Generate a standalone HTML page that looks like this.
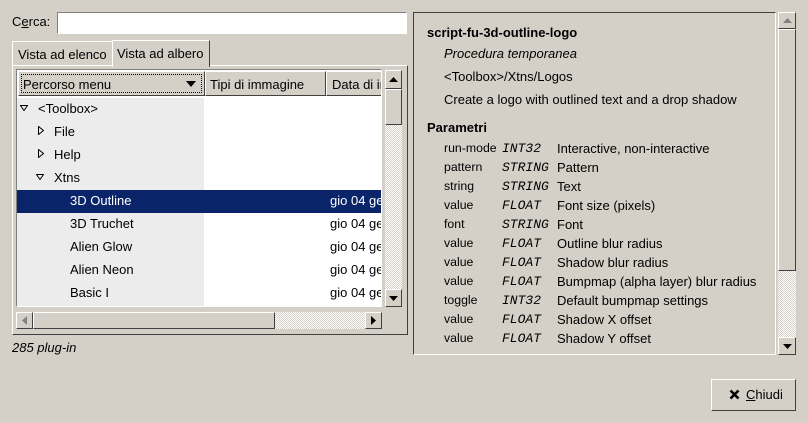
<html><head><style>
body{margin:0;width:808px;height:423px;background:#d4d0c8;font:13px "Liberation Sans",sans-serif;color:#000;position:relative;overflow:hidden}
.a{position:absolute}
.rs{border:1px solid;border-color:#fff #404040 #404040 #fff;background:#d4d0c8;box-sizing:border-box}
.sk{border:1px solid;border-color:#808080 #fff #fff #808080;box-sizing:border-box}
.st{background-color:#d4d0c8;background-image:repeating-conic-gradient(#fff 0 25%,#d4d0c8 0 50%);background-size:2px 2px}
.t{white-space:nowrap;line-height:15px}
.mono{font-family:"Liberation Mono",monospace;font-style:italic;font-size:13px}
</style></head><body>
<div class="a t" style="left:12px;top:14px">C<u>e</u>rca:</div>
<div class="a sk" style="left:57px;top:12px;width:350px;height:22px;background:#fff"></div>

<div class="a rs" style="left:12px;top:41px;width:101px;height:25px;border-bottom:none"></div>
<div class="a t" style="left:18px;top:47px">Vista ad elenco</div>
<div class="a rs" style="left:112px;top:40px;width:98px;height:27px;border-bottom:none;z-index:2"></div>
<div class="a t" style="left:117px;top:46px;z-index:3">Vista ad albero</div>
<div class="a rs" style="left:12px;top:65px;width:396px;height:270px"></div>

<div class="a sk" style="left:16px;top:69px;width:366px;height:238px;background:#fff;overflow:hidden">
 <div class="a" style="left:0;top:28px;width:187px;height:210px;background:#ececec"></div>
 <div class="a rs" style="left:1px;top:1px;width:187px;height:25px"><div class="a" style="left:2px;top:2px;right:2px;bottom:2px;border:1px dotted #000"></div></div>
 <div class="a t" style="left:6px;top:7px">Percorso menu</div>
 <svg class="a" style="left:169px;top:11px" width="10" height="6"><path d="M0 0H10L5 6Z"/></svg>
 <div class="a rs" style="left:188px;top:1px;width:121px;height:25px"></div>
 <div class="a t" style="left:193px;top:7px">Tipi di immagine</div>
 <div class="a rs" style="left:309px;top:1px;width:60px;height:25px;overflow:hidden"><div class="a t" style="left:5px;top:5px">Data di immissione</div></div>
 <div class="a" style="left:0;top:120px;width:366px;height:23px;background:#0a246a"></div>
 <svg class="a" style="left:3px;top:35px" width="8" height="6"><path d="M.5 .5H7.5L4 5.5Z" fill="none" stroke="#000"/></svg>
 <div class="a t" style="left:21px;top:31px">&lt;Toolbox&gt;</div>
 <svg class="a" style="left:21px;top:56px" width="6" height="9"><path d="M.5 .5V8.5L5.5 4.5Z" fill="none" stroke="#000"/></svg>
 <div class="a t" style="left:37px;top:54px">File</div>
 <svg class="a" style="left:21px;top:79px" width="6" height="9"><path d="M.5 .5V8.5L5.5 4.5Z" fill="none" stroke="#000"/></svg>
 <div class="a t" style="left:37px;top:77px">Help</div>
 <svg class="a" style="left:19px;top:104px" width="8" height="6"><path d="M.5 .5H7.5L4 5.5Z" fill="none" stroke="#000"/></svg>
 <div class="a t" style="left:37px;top:100px">Xtns</div>
 <div class="a t" style="left:53px;top:123px;color:#fff">3D Outline</div><div class="a t" style="left:313px;top:123px;color:#fff">gio 04 gen</div>
 <div class="a t" style="left:53px;top:146px">3D Truchet</div><div class="a t" style="left:313px;top:146px">gio 04 gen</div>
 <div class="a t" style="left:53px;top:169px">Alien Glow</div><div class="a t" style="left:313px;top:169px">gio 04 gen</div>
 <div class="a t" style="left:53px;top:192px">Alien Neon</div><div class="a t" style="left:313px;top:192px">gio 04 gen</div>
 <div class="a t" style="left:53px;top:215px">Basic I</div><div class="a t" style="left:313px;top:215px">gio 04 gen</div>
</div>

<div class="a st" style="left:385px;top:70px;width:17px;height:237px"></div>
<div class="a rs" style="left:385px;top:70px;width:17px;height:19px"></div>
<svg class="a" style="left:389px;top:77px" width="9" height="5"><path d="M0 5H9L4.5 0Z"/></svg>
<div class="a rs" style="left:385px;top:89px;width:17px;height:36px"></div>
<div class="a rs" style="left:385px;top:289px;width:17px;height:18px"></div>
<svg class="a" style="left:389px;top:296px" width="9" height="5"><path d="M0 0H9L4.5 5Z"/></svg>

<div class="a st" style="left:16px;top:312px;width:366px;height:17px"></div>
<div class="a rs" style="left:16px;top:312px;width:17px;height:17px"></div>
<svg class="a" style="left:22px;top:316px" width="5" height="9"><path d="M5 0V9L0 4.5Z" fill="#808080"/></svg>
<div class="a rs" style="left:33px;top:312px;width:242px;height:17px"></div>
<div class="a rs" style="left:365px;top:312px;width:17px;height:17px"></div>
<svg class="a" style="left:371px;top:316px" width="5" height="9"><path d="M0 0V9L5 4.5Z"/></svg>

<div class="a t" style="left:12px;top:340px;font-style:italic">285 plug-in</div>

<div class="a sk" style="left:413px;top:12px;width:363px;height:343px;border-color:#404040 #fff #fff #404040"></div>
<div class="a t" style="left:427px;top:25px;font-weight:bold">script-fu-3d-outline-logo</div>
<div class="a t" style="left:444px;top:46px;font-style:italic">Procedura temporanea</div>
<div class="a t" style="left:444px;top:69px">&lt;Toolbox&gt;/Xtns/Logos</div>
<div class="a t" style="left:444px;top:92px">Create a logo with outlined text and a drop shadow</div>
<div class="a t" style="left:427px;top:120px;font-weight:bold">Parametri</div>
<div class="a" style="left:444px;top:139px;line-height:19px;white-space:nowrap;font-size:12.3px">
run-mode<br>pattern<br>string<br>value<br>font<br>value<br>value<br>value<br>toggle<br>value<br>value</div>
<div class="a mono" style="left:502px;top:139px;line-height:19px;white-space:nowrap">INT32<br>STRING<br>STRING<br>FLOAT<br>STRING<br>FLOAT<br>FLOAT<br>FLOAT<br>INT32<br>FLOAT<br>FLOAT</div>
<div class="a" style="left:557px;top:139px;line-height:19px;white-space:nowrap">Interactive, non-interactive<br>Pattern<br>Text<br>Font size (pixels)<br>Font<br>Outline blur radius<br>Shadow blur radius<br>Bumpmap (alpha layer) blur radius<br>Default bumpmap settings<br>Shadow X offset<br>Shadow Y offset</div>

<div class="a st" style="left:778px;top:12px;width:18px;height:343px"></div>
<div class="a rs" style="left:778px;top:12px;width:18px;height:17px"></div>
<svg class="a" style="left:783px;top:18px" width="9" height="5"><path d="M0 5H9L4.5 0Z" fill="#808080"/></svg>
<div class="a rs" style="left:778px;top:29px;width:18px;height:242px"></div>
<div class="a rs" style="left:778px;top:337px;width:18px;height:18px"></div>
<svg class="a" style="left:783px;top:344px" width="9" height="5"><path d="M0 0H9L4.5 5Z"/></svg>

<div class="a" style="left:711px;top:379px;width:85px;height:32px;box-sizing:border-box;border:1px solid;border-color:#fff #404040 #404040 #fff"></div>
<svg class="a" style="left:729px;top:389px" width="11" height="11"><path d="M1.5 1.5L9.5 9.5M9.5 1.5L1.5 9.5" stroke="#000" stroke-width="2.6"/></svg>
<div class="a t" style="left:746px;top:387px"><u>C</u>hiudi</div>
</body></html>
